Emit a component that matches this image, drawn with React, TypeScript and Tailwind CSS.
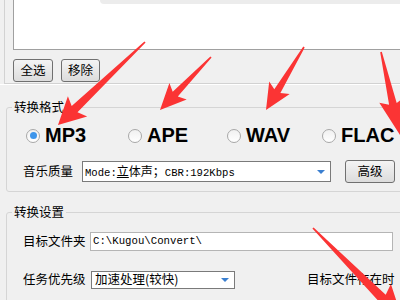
import type { ReactNode } from 'react'

type Arrow = { x1: number; y1: number; x2: number; y2: number; L: number; W: number }

const arrows: Arrow[] = [
  { x1: 145, y1: 42, x2: 58, y2: 125, L: 23, W: 14 },
  { x1: 211, y1: 57, x2: 160, y2: 110, L: 22, W: 12 },
  { x1: 304, y1: 47, x2: 266, y2: 110, L: 22, W: 12 },
  { x1: 381, y1: 52, x2: 400, y2: 135, L: 32, W: 13 },
  { x1: 313, y1: 228, x2: 402, y2: 318, L: 28, W: 16 },
]

function arrowPoints({ x1, y1, x2, y2, L, W }: Arrow) {
  const dx = x2 - x1
  const dy = y2 - y1
  const len = Math.hypot(dx, dy)
  const ux = dx / len
  const uy = dy / len
  const nx = -uy
  const ny = ux
  const bx = x2 - ux * L
  const by = y2 - uy * L
  const sw = W * 0.3
  const tw = 0.8
  const back = 4
  const pts = [
    [x1 + nx * tw, y1 + ny * tw],
    [bx + nx * sw, by + ny * sw],
    [bx - ux * back + nx * W, by - uy * back + ny * W],
    [x2, y2],
    [bx - ux * back - nx * W, by - uy * back - ny * W],
    [bx - nx * sw, by - ny * sw],
    [x1 - nx * tw, y1 - ny * tw],
  ]
  return pts.map((p) => p.map((v) => v.toFixed(1)).join(',')).join(' ')
}

function Btn({ children, className }: { children: ReactNode; className: string }) {
  return (
    <div
      className={`h-[23px] flex items-center justify-center rounded-[3px] border border-[#707070] bg-linear-to-b from-[#f4f4f4] to-[#dcdcdc] ${className}`}
    >
      {children}
    </div>
  )
}

function Radio({ label, checked, className }: { label: string; checked?: boolean; className: string }) {
  return (
    <div className={`flex items-center gap-[5px] ${className}`}>
      <div className="w-[14px] h-[14px] rounded-full border border-[#a8a8a8] bg-linear-to-b from-[#f0f0f0] to-white flex items-center justify-center">
        {checked && <div className="w-[7px] h-[7px] rounded-full bg-[#3e95ea]" />}
      </div>
      <span className="font-['Liberation_Sans',Arial,sans-serif] font-bold text-[20px] leading-[23px]">{label}</span>
    </div>
  )
}

function DropArrow() {
  return (
    <svg width="8" height="4" viewBox="0 0 8 4" className="shrink-0">
      <polygon points="0,0 8,0 4,4" fill="#3a7fd0" />
    </svg>
  )
}

export default function App() {
  return (
    <div className="relative w-[400px] h-[300px] overflow-hidden bg-[#f0f0f0] text-black text-[12.5px] font-['Noto_Sans_CJK_SC',sans-serif]">
      {/* file list group */}
      <div className="ml-[4px] h-[84px] border-l border-b border-[#d2d2d2] pl-[8px]">
        <div className="h-[50px] bg-white border-l border-b border-[#a0a0a0]">
          <div className="ml-[86px] h-[4px] rounded-bl-[6px] bg-[#ececec]" />
        </div>
        <div className="mt-[9px] flex gap-[8px]">
          <Btn className="w-[40px]">全选</Btn>
          <Btn className="w-[39px]">移除</Btn>
        </div>
      </div>
      <div className="h-px bg-white" />

      {/* format group */}
      <fieldset className="mt-[14px] ml-[6px] w-[400px] border border-[#d5d5d5] rounded-[3px] pb-[8px]">
        <legend className="ml-[5px] px-[2px] leading-[16px]">转换格式</legend>
        <div className="mt-[9px] flex items-center pl-[19px]">
          <Radio label="MP3" checked className="w-[102px]" />
          <Radio label="APE" className="w-[99px]" />
          <Radio label="WAV" className="w-[95px]" />
          <Radio label="FLAC" className="w-[90px]" />
        </div>
        <div className="mt-[13px] flex items-center h-[23px] pl-[16px]">
          <span className="w-[59px] shrink-0">音乐质量</span>
          <div className="w-[249px] h-[21px] bg-white border border-[#7a7a7a] flex items-center pl-[2px] pr-[5px]">
            <span className="flex-1 whitespace-nowrap font-['Liberation_Mono',monospace] text-[10.6px]">
              Mode:<span className="font-['Noto_Sans_CJK_SC',sans-serif] text-[12px]"><span className="underline">立</span>体声；</span>CBR:192Kbps
            </span>
            <DropArrow />
          </div>
          <Btn className="ml-[14px] w-[50px]">高级</Btn>
        </div>
      </fieldset>

      {/* settings group */}
      <fieldset className="mt-[12px] ml-[6px] w-[400px] h-[120px] border border-[#d5d5d5] rounded-[3px]">
        <legend className="ml-[5px] px-[2px] leading-[16px]">转换设置</legend>
        <div className="mt-[12px] flex items-center h-[19px] pl-[16px]">
          <span className="w-[67px] shrink-0">目标文件夹</span>
          <div className="w-[303px] h-[19px] bg-white border border-[#b5b5b5] flex items-center pl-[2px]">
            <span className="font-['Liberation_Mono',monospace] text-[10.7px] whitespace-nowrap">C:\Kugou\Convert\</span>
          </div>
        </div>
        <div className="mt-[19px] flex items-center h-[19px] pl-[16px]">
          <span className="w-[68px] shrink-0">任务优先级</span>
          <div className="w-[144px] h-[18px] bg-white border border-[#7a7a7a] flex items-center pl-[3px] pr-[5px]">
            <span className="flex-1 whitespace-nowrap">加速处理(较快)</span>
            <DropArrow />
          </div>
          <span className="ml-[72px] whitespace-nowrap">目标文件存在时</span>
        </div>
      </fieldset>

      {/* annotation arrows */}
      <svg className="absolute inset-0 pointer-events-none" width="400" height="300" viewBox="0 0 400 300">
        {arrows.map((a, i) => (
          <polygon key={i} points={arrowPoints(a)} fill="#fb3434" />
        ))}
      </svg>
    </div>
  )
}
